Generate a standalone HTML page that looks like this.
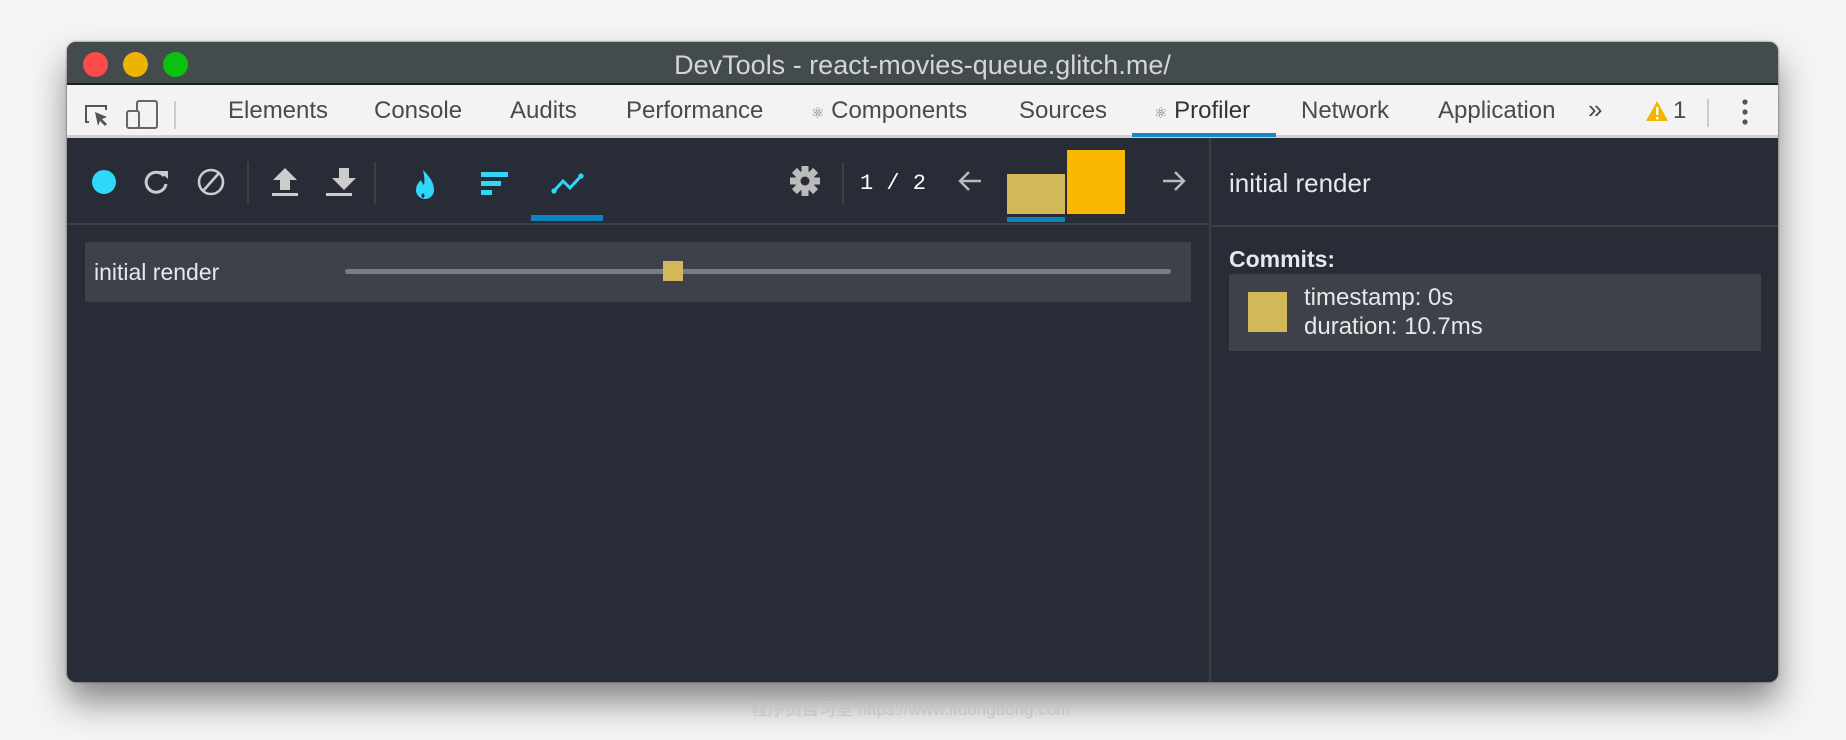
<!DOCTYPE html>
<html><head><meta charset="utf-8"><style>
*{margin:0;padding:0;box-sizing:border-box}
body{width:1846px;height:740px;overflow:hidden;position:relative;background:#f4f4f4;font-family:"Liberation Sans",Arial,sans-serif}
.win{position:absolute;left:67px;top:42px;width:1711px;height:640px;border-radius:9px;overflow:hidden;background:#282c37;box-shadow:0 20px 34px rgba(0,0,0,.45),0 0 2px rgba(0,0,0,.6)}
.title{position:absolute;left:0;top:0;width:100%;height:43px;background:#434b4d;border-bottom:2px solid #1c1f20}
.title .t{position:absolute;left:0;right:0;top:8px;text-align:center;color:#d4d6d6;font-size:27px;line-height:30px}
.dot{position:absolute;top:10px;width:25px;height:25px;border-radius:50%}
.tabs{position:absolute;left:0;top:43px;width:100%;height:53px;background:#f3f3f3;border-bottom:3px solid #cfcfcf}
.tab{position:absolute;top:12px;font-size:24px;line-height:28px;color:#4a4a4a}
.a{position:absolute;left:0;top:0}
.dark{position:absolute;left:0;top:96px;width:100%;bottom:0}
.ab{position:absolute}
.txt{position:absolute;color:#e8e8ea;line-height:28px}
</style></head><body>
<div class="win">
 <div class="title">
  <div class="dot" style="left:16px;background:#fc4b49"></div>
  <div class="dot" style="left:56px;background:#eeb300"></div>
  <div class="dot" style="left:96px;background:#0cc10e"></div>
  <div class="t">DevTools - react-movies-queue.glitch.me/</div>
 </div>
 <div class="tabs">
  <svg class="a" width="120" height="50" viewBox="0 0 120 50">
   <path d="M22 37h-3V21h20v4" fill="none" stroke="#555" stroke-width="2"/>
   <path d="M28 27l12 5-5 2 5 5-2 2-5-5-2 5z" fill="#555"/>
   <rect x="70" y="16" width="20" height="27" rx="2" fill="none" stroke="#666" stroke-width="2"/>
   <rect x="60" y="26" width="12" height="17" rx="2" fill="#f3f3f3" stroke="#666" stroke-width="2"/>
   <line x1="108" y1="16" x2="108" y2="44" stroke="#ccc" stroke-width="2"/>
  </svg>
  <div class="tab" style="left:161px">Elements</div>
  <div class="tab" style="left:307px">Console</div>
  <div class="tab" style="left:443px">Audits</div>
  <div class="tab" style="left:559px">Performance</div>
  <div class="tab" style="left:744px"><span style="font-size:15px;color:#777">⚛</span> Components</div>
  <div class="tab" style="left:952px">Sources</div>
  <div class="tab" style="left:1087px;color:#333"><span style="font-size:15px;color:#777">⚛</span> Profiler</div>
  <div style="position:absolute;left:1065px;top:48px;width:144px;height:4px;background:#1a86c8"></div>
  <div class="tab" style="left:1234px">Network</div>
  <div class="tab" style="left:1371px">Application</div>
  <div class="tab" style="left:1521px;font-size:26px;top:10px">»</div>
  <svg class="ab" style="left:1578px;top:14px" width="24" height="24" viewBox="0 0 24 24"><path d="M12 2L23 22H1z" fill="#f2b600"/><rect x="11" y="8" width="2.4" height="8" fill="#fff"/><rect x="11" y="18" width="2.4" height="2.4" fill="#fff"/></svg>
  <div class="tab" style="left:1606px">1</div>
  <div style="position:absolute;left:1640px;top:14px;width:2px;height:28px;background:#ccc"></div>
  <svg class="ab" style="left:1673px;top:13px" width="10" height="30"><circle cx="5" cy="4" r="2.6" fill="#555"/><circle cx="5" cy="14" r="2.6" fill="#555"/><circle cx="5" cy="24" r="2.6" fill="#555"/></svg>
 </div>
 <div class="dark">
  <div style="position:absolute;left:0;top:85px;width:1143px;height:2px;background:#3b3f48"></div>
  <div style="position:absolute;left:1142px;top:0;width:2px;bottom:0;background:#3b3f48"></div>
  <div style="position:absolute;left:1144px;top:87px;right:0;height:2px;background:#3b3f48"></div>
  <svg class="a" width="1143" height="86">
   <circle cx="37" cy="44" r="12" fill="#2fd8fa"/>
   <path d="M97 38a10 10 0 1 0 2 8" fill="none" stroke="#ccc" stroke-width="3"/>
   <path d="M92 33h9v8z" fill="#ccc"/>
   <circle cx="144" cy="44" r="12" fill="none" stroke="#ccc" stroke-width="2.6"/>
   <line x1="136" y1="53" x2="152" y2="35" stroke="#ccc" stroke-width="2.6"/>
   <line x1="181" y1="24" x2="181" y2="66" stroke="#3b3f48" stroke-width="2"/>
   <path d="M218 30l-12 12h7v10h10V42h7z" fill="#ccc"/><rect x="205" y="55" width="26" height="3" fill="#ccc"/>
   <path d="M272 30v10h-7l12 12 12-12h-7V30z" fill="#ccc"/><rect x="259" y="55" width="26" height="3" fill="#ccc"/>
   <line x1="308" y1="24" x2="308" y2="66" stroke="#3b3f48" stroke-width="2"/>
   <path d="M356 32c6 6 11 12 11 20a9 9 0 0 1-18 0c0-5 3-8 5-10 1 3 2 4 3 5 1-5 0-10-1-15z" fill="#2fd8fa"/>
   <path d="M356 55c-2 2-2 4 0 5 2-1 2-3 0-5z" fill="#282c37"/>
   <rect x="414" y="34" width="27" height="5" fill="#2fd8fa"/><rect x="414" y="43" width="20" height="5" fill="#2fd8fa"/><rect x="414" y="52" width="11" height="5" fill="#2fd8fa"/>
   <path d="M487 53l9-10 7 7 11-12" fill="none" stroke="#2fd8fa" stroke-width="3"/>
   <circle cx="487" cy="53" r="2.6" fill="#2fd8fa"/><circle cx="514" cy="38" r="2.6" fill="#2fd8fa"/>
   <rect x="464" y="77" width="72" height="6" fill="#0a86c3"/>
   <g transform="translate(738 43)" fill="#bbb"><circle r="10"/><g><rect x="-3.5" y="-15" width="7" height="30"/><rect x="-3.5" y="-15" width="7" height="30" transform="rotate(45)"/><rect x="-3.5" y="-15" width="7" height="30" transform="rotate(90)"/><rect x="-3.5" y="-15" width="7" height="30" transform="rotate(135)"/></g><circle r="4.5" fill="#282c37"/></g>
   <line x1="776" y1="24" x2="776" y2="66" stroke="#3b3f48" stroke-width="2"/>
   <text x="793" y="51" fill="#fff" font-family="Liberation Mono,monospace" font-size="22">1 / 2</text>
   <path d="M914 43h-20m8-9l-9 9 9 9" fill="none" stroke="#bbb" stroke-width="2.4"/>
   <rect x="940" y="36" width="58" height="40" fill="#d3b85a"/>
   <rect x="940" y="79" width="58" height="5" fill="#0a86c3"/>
   <rect x="1000" y="12" width="58" height="64" fill="#fbb800"/>
   <path d="M1096 43h20m-8-9l9 9-9 9" fill="none" stroke="#bbb" stroke-width="2.4"/>
  </svg>
  <div style="position:absolute;left:18px;top:104px;width:1106px;height:60px;background:#3e4149"></div>
  <div class="txt" style="left:27px;top:120px;font-size:23px">initial render</div>
  <div style="position:absolute;left:278px;top:131px;width:826px;height:5px;border-radius:3px;background:#7c7d80"></div>
  <div style="position:absolute;left:596px;top:123px;width:20px;height:20px;background:#d3b85a"></div>
  <div class="txt" style="left:1162px;top:31px;font-size:26px">initial render</div>
  <div class="txt" style="left:1162px;top:107px;font-weight:bold;font-size:23px">Commits:</div>
  <div style="position:absolute;left:1162px;top:136px;width:532px;height:77px;background:#3e4149"></div>
  <div style="position:absolute;left:1181px;top:154px;width:39px;height:40px;background:#d3b85a"></div>
  <div class="txt" style="left:1237px;top:146px;font-size:24px">timestamp: 0s</div>
  <div class="txt" style="left:1237px;top:175px;font-size:24px">duration: 10.7ms</div>
 </div>
</div>
<div style="position:absolute;left:751px;top:695px;color:#c4c4c4;font-size:17px;font-family:'Liberation Sans','Noto Sans CJK SC',sans-serif">程序员自习室 https://www.itdongdong.com</div>
</body></html>
